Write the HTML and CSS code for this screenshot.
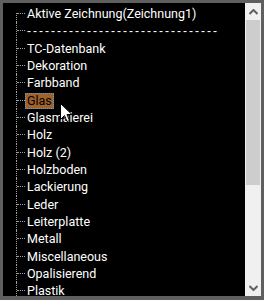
FILE: index.html
```html
<!Doctype html>
<html lang='de'>
<head>
    <meta charset='utf-8'>
    <title>Materialien</title>
    <link rel="stylesheet" href="styles.css">
</head>
<body>
    <div class='frame'>
        <div class='tree'>
            <ul>
                <li>Aktive Zeichnung(Zeichnung1)</li>
                <li><span class='dashes'>--------------------------------</span></li>
                <li>TC-Datenbank</li>
                <li>Dekoration</li>
                <li>Farbband</li>
                <li><span class='sel'>Glas</span></li>
                <li>Glasmalerei</li>
                <li>Holz</li>
                <li>Holz (2)</li>
                <li>Holzboden</li>
                <li>Lackierung</li>
                <li>Leder</li>
                <li>Leiterplatte</li>
                <li>Metall</li>
                <li>Miscellaneous</li>
                <li>Opalisierend</li>
                <li>Plastik</li>
            </ul>
            <svg class='cursor' width='13' height='20' viewBox='0 0 13 20'>
                <path d='M0.5 0.5 L0.5 16.5 L4.5 12.5 L7 18.5 L9.5 17.5 L7 11.5 L12 11.5 Z' fill='#fff' stroke='#000' stroke-width='1'/>
            </svg>
        </div>
        <div class='scrollbar'>
            <div class='sbtn'>
                <svg width='9' height='6' viewBox='0 0 9 6'><path d='M0.5 5 L4.5 1 L8.5 5' fill='none' stroke='#606060' stroke-width='2'/></svg>
            </div>
            <div class='track'>
                <div class='thumb'></div>
            </div>
            <div class='sbtn'>
                <svg width='9' height='6' viewBox='0 0 9 6'><path d='M0.5 1 L4.5 5 L8.5 1' fill='none' stroke='#606060' stroke-width='2'/></svg>
            </div>
        </div>
    </div>
</body>
</html>
```
FILE: styles.css
```css
html,
body {
    margin: 0;
    background-color: #000000;
    font-family: Roboto, "Noto Sans", sans-serif;
}

.frame {
    width: 264px;
    height: 300px;
    box-sizing: border-box;
    border: 3px solid #5f5f5f;
    border-bottom-width: 4px;
    display: flex;
    background-color: #000000;
}

.tree {
    flex: 1;
    position: relative;
    overflow: hidden;
    padding-top: 2px;
}

ul {
    list-style-type: none;
    margin: 0 0 0 13px;
    padding: 0;
}
li {
    position: relative;
    height: 17.33px;
    line-height: 17.33px;
    padding-left: 11px;
    font-size: 12.5px;
    color: #ffffff;
    white-space: nowrap;
}
/* Baumlinien */
li::before {
    content: '';
    position: absolute;
    left: 1px;
    top: 8px;
    width: 8px;
    border-top: 1px dotted #a0a0a0;
}
li::after {
    content: '';
    position: absolute;
    left: 0;
    top: 0;
    bottom: 0;
    border-left: 1px dotted #a0a0a0;
}
li:first-child::after {
    top: 8px;
}

.dashes {
    font-family: "Liberation Sans", sans-serif;
    font-size: 12px;
    letter-spacing: 2px;
}

.sel {
    display: inline-block;
    height: 14px;
    line-height: 14px;
    margin-left: -2px;
    padding: 0 1px 0 1px;
    background-color: #a0622b;
    border: 1px dotted #5a9ad8;
    color: #000000;
}

.cursor {
    position: absolute;
    left: 57px;
    top: 100px;
}

.scrollbar {
    width: 16px;
    background-color: #f0f0f0;
    display: flex;
    flex-direction: column;
}
.sbtn {
    height: 17px;
    display: flex;
    align-items: center;
    justify-content: center;
}
.track {
    flex: 1;
}
.thumb {
    height: 165px;
    margin: 0 1px;
    background-color: #cdcdcd;
}
```
